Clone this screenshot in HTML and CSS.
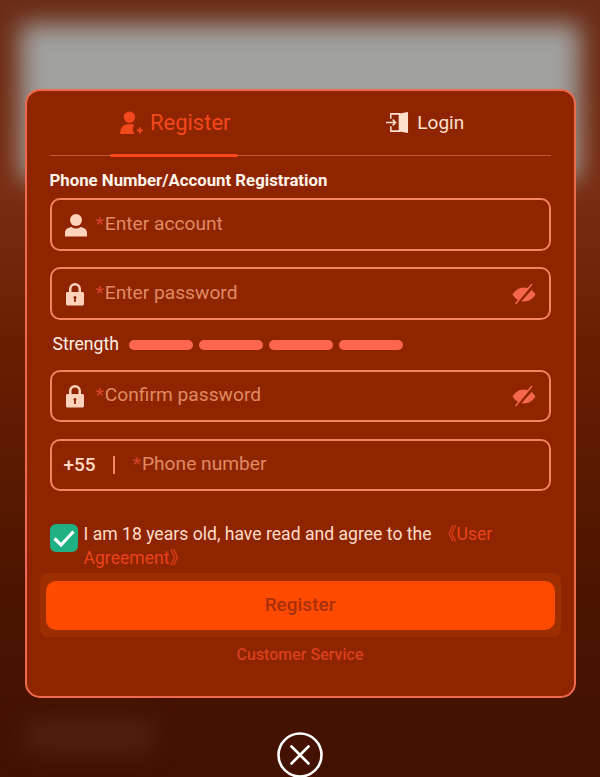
FILE: index.html
```html
<!doctype html>
<html>
<head>
<meta charset="utf-8">
<title>Register</title>
<link rel="stylesheet" href="styles.css">
</head>
<body>
<!--blurred page behind the dialog-->
<div class="backdrop">
	<div class="back-panel"></div>
	<div class="back-patch"></div>
</div>
<div class="dialog">
	<div class="tabs">
		<div class="tab tab-active">
			<svg class="tab-icon" viewBox="0 0 24 24" width="25" height="25"><circle cx="10" cy="7" r="5.500" fill="currentColor"/><path d="M1 23c0-6 3-9.500 9-9.500 2 0 3.500.4 4.800 1.100-1 1-1.500 2.400-1.500 3.900 0 1.700.6 3.300 1.800 4.500z" fill="currentColor"/><path d="M20 16.500v6M17 19.500h6" stroke="currentColor" stroke-width="1.800"/></svg>
			<span class="tab-text-big">Register</span>
		</div>
		<div class="tab">
			<svg class="tab-icon" viewBox="0 0 24 24" width="23" height="25"><path d="M5 8V3h9v18H5v-5" fill="none" stroke="currentColor" stroke-width="1.600"/><path d="M14 2.500 23 1v22l-9-1.500z" fill="currentColor"/><path d="M0 12h10M7 9l3 3-3 3" fill="none" stroke="currentColor" stroke-width="1.600"/></svg>
			<span>Login</span>
		</div>
	</div>
	<h3 class="form-title">Phone Number/Account Registration</h3>
	<div class="field">
		<svg class="field-icon" viewBox="0 0 24 24" width="24" height="24"><circle cx="12" cy="7" r="6"/><path d="M1 23.500v-4c0-3 3-5 6.500-5.500 1.400 1 3 1.500 4.500 1.500s3.100-.5 4.500-1.500c3.500.5 6.500 2.500 6.500 5.500v4z"/></svg>
		<span class="hint"><i>*</i>Enter account</span>
	</div>
	<div class="field field-gap">
		<svg class="field-icon" viewBox="1 0 24 24" width="24" height="24"><use href="#lock"/></svg>
		<span class="hint"><i>*</i>Enter password</span>
		<svg class="eye" viewBox="0 0 24 24" width="24" height="24"><use href="#eye-off"/></svg>
	</div>
	<div class="strength">
		<span class="strength-label">Strength</span>
		<span class="bar"></span><span class="bar"></span><span class="bar"></span><span class="bar"></span>
	</div>
	<div class="field field-short">
		<svg class="field-icon" viewBox="1 0 24 24" width="24" height="24"><use href="#lock"/></svg>
		<span class="hint"><i>*</i>Confirm password</span>
		<svg class="eye" viewBox="0 0 24 24" width="24" height="24"><use href="#eye-off"/></svg>
	</div>
	<div class="field field-short field-gap2">
		<span class="code">+55</span>
		<span class="code-line"></span>
		<span class="hint"><i>*</i>Phone number</span>
	</div>
	<div class="agree">
		<span class="check">
			<svg viewBox="0 0 28 28" width="28" height="28"><path d="M4.500 14.500 11 21 23.500 7.500" fill="none" stroke="#fff" stroke-width="3.200"/></svg>
		</span>
		<p class="agree-text">I am 18 years old, have read and agree to the <span class="agree-link agree-first">《User</span> <span class="agree-link">Agreement》</span></p>
	</div>
	<div class="btn-halo">
		<div class="btn">Register</div>
	</div>
	<div class="service">Customer Service</div>
</div>
<svg class="close" viewBox="0 0 46 46" width="46" height="46"><circle cx="23" cy="23" r="21.500" fill="none" stroke="#fff" stroke-width="2.600"/><path d="M14.500 14.500l17 17M31.500 14.500l-17 17" stroke="#fff" stroke-width="2.600" stroke-linecap="round"/></svg>

<!--shared icons-->
<svg class="defs" width="0" height="0">
	<defs>
		<path id="lock" fill-rule="evenodd" d="M6 10V7a6 6 0 0 1 12 0v3h1.500c.8 0 1.500.7 1.500 1.500V22c0 .8-.7 1.500-1.500 1.500h-15C3.700 23.500 3 22.800 3 22V11.500C3 10.700 3.700 10 4.500 10zM8.500 10h7V7a3.500 3.500 0 0 0-7 0zM10.500 15.500a1.500 1.500 0 0 0 .6 1.200V20h1.800v-3.300a1.500 1.500 0 1 0-2.400-1.200z"/>
		<g id="eye-off">
			<path d="M12 5.500C6.500 5.500 2.500 9 .5 12.500 2.500 16 6.500 19.500 12 19.500s9.500-3.500 11.500-7C21.500 9 17.500 5.500 12 5.500z"/>
			<path d="M5 22 21 4" stroke="#8e2500" stroke-width="3"/>
			<path d="M3.500 22 20 2" stroke="currentColor" stroke-width="1.500"/>
		</g>
	</defs>
</svg>
</body>
</html>
```

FILE: styles.css
```css
*{
	margin:0;
	padding:0;
	box-sizing:border-box;
}
body
{
	width:600px;
	height:777px;
	overflow:hidden;
	position:relative;
	background:linear-gradient(#6a2c16 0,#7a2c10 200px,#6a1e00 340px,#4a1400 600px,#431100 777px);
	font-family:Roboto,"Noto Sans CJK SC",sans-serif;
	display:flex;
	flex-direction:column;
	align-items:center;
	padding-top:89px;
}
/*blurred page behind*/
.backdrop
{
	position:absolute;
	left:0;
	top:0;
	width:600px;
	height:777px;
	overflow:hidden;
}
.back-panel
{
	position:absolute;
	left:20px;
	top:24px;
	width:560px;
	height:156px;
	background:#a0a09e;
	filter:blur(12px);
}
.back-patch
{
	position:absolute;
	left:26px;
	top:722px;
	width:128px;
	height:28px;
	background:#54230e;
	filter:blur(12px);
}
/*dialog*/
.dialog
{
	position:relative;
	flex:none;
	width:551px;
	height:609px;
	background:#8e2500;
	border:2px solid #ee6a4e;
	border-radius:15px;
	padding:0 23px;
}
.tabs
{
	display:flex;
	height:65px;
	border-bottom:1.500px solid #bb5a35;
}
.tab
{
	flex:1;
	position:relative;
	display:flex;
	align-items:center;
	justify-content:center;
	gap:8px;
	padding:0 0 1px 0;
	color:#ffe0cc;
	font-size:19px;
}
.tab-icon
{
	flex:none;
}
.tab-active
{
	color:#f2481c;
	gap:6px;
}
.tab-text-big
{
	font-size:22px;
}
/*underline of the active tab*/
.tab-active::after
{
	content:"";
	position:absolute;
	left:60px;
	bottom:-2px;
	width:128px;
	height:3px;
	border-radius:2px;
	background:#f9471a;
}
.form-title
{
	color:#fff4ea;
	font-size:16.800px;
	font-weight:700;
	line-height:20px;
	margin:14px 0 8px;
}
.field
{
	height:53px;
	border:2px solid #f4835f;
	border-radius:10px;
	display:flex;
	align-items:center;
	padding:0 12px;
	font-size:19.200px;
}
.field-gap
{
	margin-top:16px;
}
.field-short
{
	height:52px;
}
.field-gap2
{
	margin-top:17px;
}
.field-icon
{
	flex:none;
	fill:#ffd3bb;
	margin-right:8px;
}
.hint
{
	flex:1;
	color:#e08a63;
	padding-bottom:3px;
}
.hint i
{
	font-style:normal;
	color:#d9452a;
	margin-right:1px;
}
.eye
{
	flex:none;
	fill:#f4674a;
	color:#f4674a;
	margin-right:1px;
}
.strength
{
	display:flex;
	align-items:center;
	height:50px;
	padding-left:3px;
}
.strength-label
{
	color:#fff0e4;
	font-size:17.600px;
	width:76px;
	padding-bottom:2px;
}
.bar
{
	width:64px;
	height:10px;
	border-radius:5px;
	background:#ff6650;
	margin-right:6px;
}
.code
{
	color:#ffdcc4;
	font-weight:500;
	font-size:19px;
	padding-bottom:2px;
}
.code-line
{
	width:2px;
	height:18px;
	background:#f08a63;
	margin:0 18px 0 17px;
}
.agree
{
	display:flex;
	margin-top:32px;
	gap:6px;
}
.check
{
	flex:none;
	width:28px;
	height:28px;
	border-radius:6px;
	background:#1fb083;
	margin-top:1px;
}
.check svg
{
	display:block;
}
.agree-text
{
	color:#ffdcc8;
	font-size:17.600px;
	line-height:24px;
	margin-top:-1px;
	width:440px;
}
.agree-link
{
	color:#e8431c;
}
.agree-first
{
	margin-left:3px;
}
.btn-halo
{
	margin:3px -10px 0 -10px;
	height:64px;
	padding:8px 6px 7px 6px;
	background:#9c2e00;
	border-radius:8px;
}
.btn
{
	height:49px;
	background:#ff4a00;
	border-radius:10px;
	color:#a8300a;
	font-size:19px;
	font-weight:500;
	text-align:center;
	line-height:47px;
}
.service
{
	color:#d9401c;
	font-size:16px;
	font-weight:500;
	text-align:center;
	margin-top:9px;
	line-height:18px;
}
.close
{
	position:relative;
	flex:none;
	margin-top:34px;
}
.defs
{
	position:absolute;
}
```
